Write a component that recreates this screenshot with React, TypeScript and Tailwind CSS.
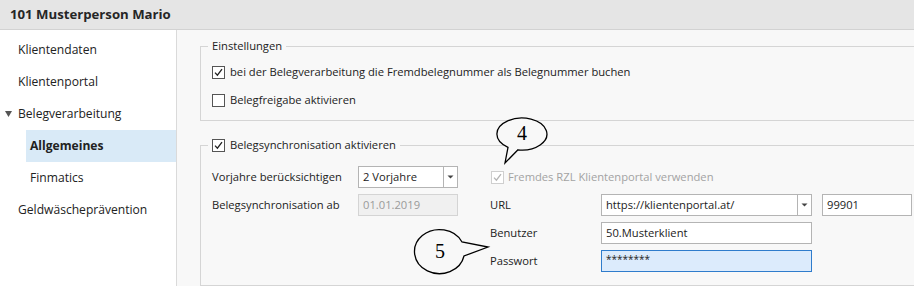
import { useState } from 'react';

const font = { fontFamily: '"Open Sans", "Noto Sans", sans-serif' };

function Check({ checked, disabled }: { checked?: boolean; disabled?: boolean }) {
  return (
    <span
      className={`inline-flex h-[13px] w-[13px] shrink-0 items-center justify-center border bg-white ${
        disabled ? 'border-[#cfcfcf]' : 'border-[#555]'
      }`}
    >
      {checked && (
        <svg width="9" height="9" viewBox="0 0 9 9">
          <path
            d="M1 4.6 L3.4 7.2 L8 1.2"
            fill="none"
            stroke={disabled ? '#b5b5b5' : '#222'}
            strokeWidth="1.3"
          />
        </svg>
      )}
    </span>
  );
}

function Arrow() {
  return (
    <span className="flex w-[14px] items-center justify-center border-l border-[#b4b4b4]">
      <svg width="7" height="4" viewBox="0 0 7 4">
        <path d="M0.5 0.5 L6.5 0.5 L3.5 3.5 Z" fill="#444" />
      </svg>
    </span>
  );
}

const navItems = [
  { label: 'Klientendaten', level: 0 },
  { label: 'Klientenportal', level: 0 },
  { label: 'Belegverarbeitung', level: 0, open: true },
  { label: 'Allgemeines', level: 1 },
  { label: 'Finmatics', level: 1 },
  { label: 'Geldwäscheprävention', level: 0 },
];

export default function App() {
  const [active] = useState('Allgemeines');

  return (
    <div className="relative flex h-[286px] w-[914px] flex-col overflow-hidden bg-[#f8f8f8] text-[#222]" style={font}>
      {/* Header */}
      <div className="flex h-[30px] shrink-0 items-center border-b border-[#d2d2d2] bg-[#e5e5e5] pl-[10px] text-[13.2px] font-bold text-[#262626]">
        101 Musterperson Mario
      </div>

      <div className="flex flex-1">
        {/* Sidebar */}
        <div className="w-[177px] shrink-0 border-r border-[#dadada] bg-white pt-[4px]">
          {navItems.map((item) => (
            <div key={item.label} className={`flex h-[32px] items-center ${item.level ? 'pl-[26px]' : ''}`}>
              <div
                className={`relative flex h-full flex-1 items-center text-[12.1px] ${
                  item.level ? 'pl-[4px]' : 'pl-[18px]'
                } ${active === item.label ? 'bg-[#d9eaf7] font-bold' : ''}`}
              >
                {item.open && (
                  <svg className="absolute left-[5px] top-[13px]" width="7" height="6" viewBox="0 0 7 6">
                    <path d="M0 0 L7 0 L3.5 6 Z" fill="#555" />
                  </svg>
                )}
                {item.label}
              </div>
            </div>
          ))}
        </div>

        {/* Main */}
        <div className="flex-1 pl-[23px] pt-[8px] text-[11.2px]">
          <fieldset className="w-[760px] border border-[#d5d5d5] pb-[6px] pl-[11px]">
            <legend className="-ml-[4px] px-[4px] leading-[16px]">Einstellungen</legend>
            <div className="pt-[4px]">
              <label className="flex h-[28px] items-center gap-[5px]">
                <Check checked />
                bei der Belegverarbeitung die Fremdbelegnummer als Belegnummer buchen
              </label>
              <label className="flex h-[28px] items-center gap-[5px]">
                <Check />
                Belegfreigabe aktivieren
              </label>
            </div>
          </fieldset>

          <fieldset className="mt-[16px] w-[760px] border border-[#d5d5d5] pb-[10px] pl-[11px]">
            <legend className="-ml-[4px] px-[4px] leading-[16px]">
              <span className="flex items-center gap-[5px]">
                <Check checked />
                Belegsynchronisation aktivieren
              </span>
            </legend>
            <div className="flex pt-[10px]">
              {/* left column */}
              <div className="w-[278px]">
                <div className="flex h-[28px] items-center">
                  <span className="w-[146px]">Vorjahre berücksichtigen</span>
                  <div className="flex h-[22px] w-[100px] border border-[#b4b4b4] bg-white">
                    <span className="flex flex-1 items-center pl-[4px]">2 Vorjahre</span>
                    <Arrow />
                  </div>
                </div>
                <div className="flex h-[28px] items-center">
                  <span className="w-[146px]">Belegsynchronisation ab</span>
                  <div className="flex h-[22px] w-[100px] items-center border border-[#d4d4d4] bg-[#f0f0f0] pl-[4px] text-[#9a9a9a]">
                    01.01.2019
                  </div>
                </div>
              </div>

              {/* right column */}
              <div>
                <div className="flex h-[28px] items-center gap-[4px] pl-[1px] text-[#a3a3a3]">
                  <Check checked disabled />
                  Fremdes RZL Klientenportal verwenden
                </div>
                <div className="flex h-[28px] items-center">
                  <span className="w-[111px]">URL</span>
                  <div className="flex h-[22px] w-[211px] border border-[#b4b4b4] bg-white">
                    <span className="flex flex-1 items-center pl-[4px]">https://klientenportal.at/</span>
                    <Arrow />
                  </div>
                  <div className="ml-[10px] flex h-[22px] w-[90px] items-center border border-[#b4b4b4] bg-white pl-[4px]">
                    99901
                  </div>
                </div>
                <div className="flex h-[28px] items-center">
                  <span className="w-[111px]">Benutzer</span>
                  <div className="flex h-[22px] w-[211px] items-center border border-[#b4b4b4] bg-white pl-[4px]">
                    50.Musterklient
                  </div>
                </div>
                <div className="flex h-[28px] items-center">
                  <span className="w-[111px]">Passwort</span>
                  <div className="flex h-[22px] w-[211px] items-start border border-[#2f7ccc] bg-[#dcebfc] pl-[4px] pt-[1px] text-[10px] leading-[14px]">
                    ********
                  </div>
                </div>
              </div>
            </div>
          </fieldset>
        </div>
      </div>

      {/* Callouts */}
      <svg className="pointer-events-none absolute left-0 top-0" width="914" height="286">
        <path
          d="M 508 147.3 A 25 16 0 1 1 518 149.8 L 505 163 Z"
          fill="#f8f8f8"
          stroke="#000"
          strokeWidth="1.3"
        />
        <text x="522" y="140" textAnchor="middle" fontSize="20" fontFamily="Liberation Serif, serif" fill="#000">
          4
        </text>
        <path
          d="M 462 242 A 25 22 0 1 0 464 256 L 488 247 Z"
          fill="#f8f8f8"
          stroke="#000"
          strokeWidth="1.3"
        />
        <text x="440" y="258" textAnchor="middle" fontSize="20" fontFamily="Liberation Serif, serif" fill="#000">
          5
        </text>
      </svg>
    </div>
  );
}
